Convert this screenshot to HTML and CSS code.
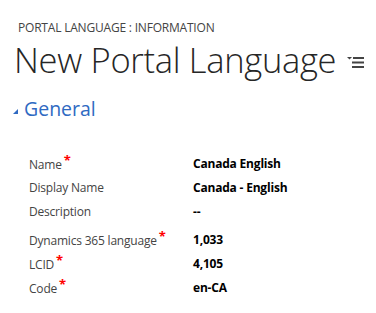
FILE: index.html
```
<!DOCTYPE html>
<html>
<head>
<meta charset="utf-8">
<link rel="stylesheet" href="styles.css">
</head>
<body>
<div class="page">
  <div class="entity">PORTAL LANGUAGE : INFORMATION</div>
  <div class="title-row">
    <h1 class="title">New Portal Language</h1>
    <svg class="menu" width="18" height="12" viewBox="0 0 18 12">
      <polygon points="0,0 5,0 2.5,2.5" fill="#444"/>
      <rect x="6" y="0" width="11" height="2" fill="#444"/>
      <rect x="5" y="4.5" width="12" height="2" fill="#444"/>
      <rect x="5" y="9" width="12" height="2" fill="#444"/>
    </svg>
  </div>
  <div class="section">
    <span class="caret"></span>
    <h2 class="section-title">General</h2>
  </div>
  <div class="fields">
    <div class="row"><div class="label">Name<span class="req">*</span></div><div class="value">Canada English</div></div>
    <div class="row"><div class="label">Display Name</div><div class="value">Canada - English</div></div>
    <div class="row"><div class="label">Description</div><div class="value">--</div></div>
    <div class="row gap"><div class="label">Dynamics 365 language<span class="req">*</span></div><div class="value">1,033</div></div>
    <div class="row"><div class="label">LCID<span class="req">*</span></div><div class="value">4,105</div></div>
    <div class="row"><div class="label">Code<span class="req">*</span></div><div class="value">en-CA</div></div>
  </div>
</div>
</body>
</html>
```
FILE: styles.css
```
html, body {
  margin: 0;
  padding: 0;
  background: #fff;
}
.page {
  font-family: "Open Sans", "Noto Sans", sans-serif;
  width: 376px;
  height: 313px;
  overflow: hidden;
}
.entity {
  margin: 20px 0 0 18px;
  font-size: 12px;
  line-height: 16px;
  color: #444;
  letter-spacing: -0.2px;
}
.title-row {
  display: flex;
  align-items: center;
  margin-left: 14px;
  height: 47px;
}
.title {
  margin: 0;
  font-weight: 300;
  font-size: 34.5px;
  line-height: 47px;
  color: #262626;
  letter-spacing: -0.3px;
}
.menu {
  margin-left: 11px;
  margin-top: 6px;
}
.section {
  display: flex;
  align-items: center;
  margin: 13px 0 0 13px;
  height: 26px;
}
.caret {
  width: 0;
  height: 0;
  border-left: 5px solid transparent;
  border-bottom: 5px solid #2f6ac2;
  margin-right: 6px;
  margin-top: 4px;
}
.section-title {
  margin: 0;
  font-weight: 400;
  font-size: 19.5px;
  line-height: 26px;
  color: #2f6ac2;
}
.fields {
  margin: 33px 0 0 29px;
}
.row {
  display: flex;
  height: 24px;
  align-items: flex-start;
  font-size: 12px;
  line-height: 18px;
}
.row.gap {
  margin-top: 4px;
}
.label {
  width: 164px;
  color: #444;
  letter-spacing: -0.2px;
}
.req {
  color: #f00;
  font-weight: 700;
  font-size: 13px;
  position: relative;
  top: -4px;
  margin-left: 2px;
}
.value {
  color: #000;
  font-weight: 700;
  letter-spacing: -0.2px;
}
```
